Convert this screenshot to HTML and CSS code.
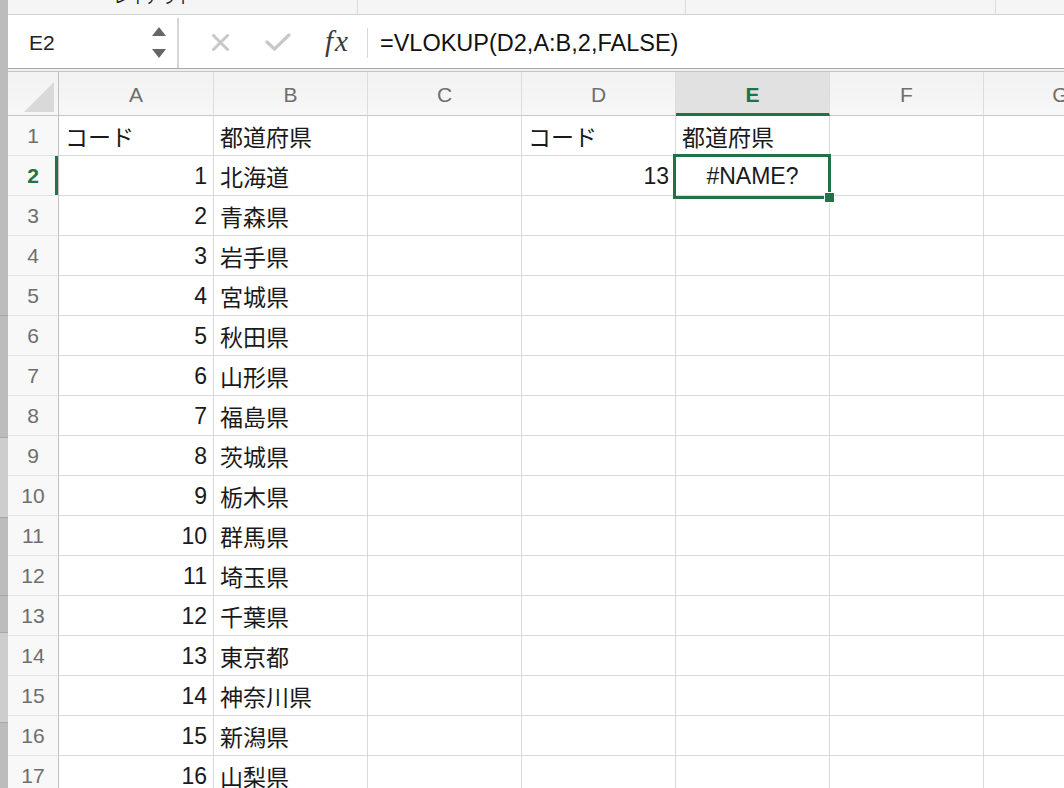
FILE: index.html
```html
<!DOCTYPE html>
<html lang="ja">

<head>
    <meta charset="UTF-8">
    <title>Book1 - シート1</title>
    <link rel="stylesheet" href="styles.css">
</head>

<body>
    <!-- edge of the window behind -->
    <div class="dock">
        <div class="dock-seg" style="height: 316px"></div>
        <div class="dock-seg" style="height: 122px"></div>
        <div class="dock-seg dock-light" style="height: 80px"></div>
        <div class="dock-seg" style="height: 78px"></div>
        <div class="dock-seg" style="height: 37px"></div>
        <div class="dock-seg dock-light" style="height: 90px"></div>
    </div>

    <div class="app">
        <div class="ribbon">
            <div class="ribbon-group ribbon-first"><span class="ribbon-label">レイアウト</span></div>
            <div class="ribbon-group ribbon-second"></div>
            <div class="ribbon-group ribbon-third"></div>
        </div>

        <div class="formula-bar">
            <div class="name-box">
                <span class="name-ref">E2</span>
                <svg class="spinner" width="14" height="32" viewBox="0 0 14 32">
                    <polygon points="7,0 14,9 0,9" fill="#666"/>
                    <polygon points="0,22 14,22 7,31" fill="#666"/>
                </svg>
            </div>
            <div class="fx-tools">
                <svg class="btn-cancel" width="17" height="17" viewBox="0 0 17 17">
                    <path d="M1.5 1.5 L15.5 15.5 M15.5 1.5 L1.5 15.5" stroke="#c8c8c8" stroke-width="3" stroke-linecap="round"/>
                </svg>
                <svg class="btn-enter" width="26" height="18" viewBox="0 0 26 18">
                    <path d="M2 9 L9.5 16 L24 2" fill="none" stroke="#c8c8c8" stroke-width="3.2" stroke-linecap="round" stroke-linejoin="round"/>
                </svg>
                <span class="fx-label">fx</span>
                <span class="fx-sep"></span>
            </div>
            <div class="formula-text">=VLOKUP(D2,A:B,2,FALSE)</div>
        </div>
        <div class="bar-gap"></div>

        <div class="sheet">
            <div class="ch corner">
                <svg width="30" height="30" viewBox="0 0 30 30"><polygon points="30,0 30,30 0,30" fill="#d9d9d9"/></svg>
            </div>
            <div class="ch">A</div>
            <div class="ch">B</div>
            <div class="ch">C</div>
            <div class="ch">D</div>
            <div class="ch ch-active">E</div>
            <div class="ch">F</div>
            <div class="ch">G</div>

            <div class="rh">1</div><div class="c">コード</div><div class="c">都道府県</div><div class="c"></div><div class="c">コード</div><div class="c">都道府県</div><div class="c"></div><div class="c"></div>
            <div class="rh rh-active">2</div><div class="c r">1</div><div class="c">北海道</div><div class="c"></div><div class="c r">13</div><div class="c mid active"><span class="sel"><span class="handle"></span></span>#NAME?</div><div class="c"></div><div class="c"></div>
            <div class="rh">3</div><div class="c r">2</div><div class="c">青森県</div><div class="c"></div><div class="c"></div><div class="c"></div><div class="c"></div><div class="c"></div>
            <div class="rh">4</div><div class="c r">3</div><div class="c">岩手県</div><div class="c"></div><div class="c"></div><div class="c"></div><div class="c"></div><div class="c"></div>
            <div class="rh">5</div><div class="c r">4</div><div class="c">宮城県</div><div class="c"></div><div class="c"></div><div class="c"></div><div class="c"></div><div class="c"></div>
            <div class="rh">6</div><div class="c r">5</div><div class="c">秋田県</div><div class="c"></div><div class="c"></div><div class="c"></div><div class="c"></div><div class="c"></div>
            <div class="rh">7</div><div class="c r">6</div><div class="c">山形県</div><div class="c"></div><div class="c"></div><div class="c"></div><div class="c"></div><div class="c"></div>
            <div class="rh">8</div><div class="c r">7</div><div class="c">福島県</div><div class="c"></div><div class="c"></div><div class="c"></div><div class="c"></div><div class="c"></div>
            <div class="rh">9</div><div class="c r">8</div><div class="c">茨城県</div><div class="c"></div><div class="c"></div><div class="c"></div><div class="c"></div><div class="c"></div>
            <div class="rh">10</div><div class="c r">9</div><div class="c">栃木県</div><div class="c"></div><div class="c"></div><div class="c"></div><div class="c"></div><div class="c"></div>
            <div class="rh">11</div><div class="c r">10</div><div class="c">群馬県</div><div class="c"></div><div class="c"></div><div class="c"></div><div class="c"></div><div class="c"></div>
            <div class="rh">12</div><div class="c r">11</div><div class="c">埼玉県</div><div class="c"></div><div class="c"></div><div class="c"></div><div class="c"></div><div class="c"></div>
            <div class="rh">13</div><div class="c r">12</div><div class="c">千葉県</div><div class="c"></div><div class="c"></div><div class="c"></div><div class="c"></div><div class="c"></div>
            <div class="rh">14</div><div class="c r">13</div><div class="c">東京都</div><div class="c"></div><div class="c"></div><div class="c"></div><div class="c"></div><div class="c"></div>
            <div class="rh">15</div><div class="c r">14</div><div class="c">神奈川県</div><div class="c"></div><div class="c"></div><div class="c"></div><div class="c"></div><div class="c"></div>
            <div class="rh">16</div><div class="c r">15</div><div class="c">新潟県</div><div class="c"></div><div class="c"></div><div class="c"></div><div class="c"></div><div class="c"></div>
            <div class="rh">17</div><div class="c r">16</div><div class="c">山梨県</div><div class="c"></div><div class="c"></div><div class="c"></div><div class="c"></div><div class="c"></div>
        </div>
    </div>
</body>

</html>
```

FILE: styles.css
```css
:root {
    --green: #217346;
    --grid: #d9d9d9;
    --head-text: #6e6e6e;
}

* {
    box-sizing: border-box;
}

body {
    margin: 0;
    width: 1064px;
    height: 788px;
    overflow: hidden;
    display: flex;
    font-family: "Liberation Sans", "Noto Sans CJK JP", sans-serif;
    background-color: #fff;
    color: #1a1a1a;
}

/* window edge on the left */
.dock {
    width: 8px;
    flex: none;
    background-color: #bcbcbc;
    display: flex;
    flex-direction: column;
}

.dock-seg {
    flex: none;
    border-bottom: 1px solid #a6a6a6;
}

.dock-light {
    background-color: #cdcdcd;
}

.app {
    flex: 1;
    min-width: 0;
    display: flex;
    flex-direction: column;
    overflow: hidden;
}

/* bottom of the ribbon */
.ribbon {
    height: 15px;
    flex: none;
    display: flex;
    background-color: #f5f5f5;
    border-bottom: 1px solid #d2d2d2;
    overflow: hidden;
}

.ribbon-group {
    flex: none;
    border-right: 1px solid #dcdcdc;
    overflow: hidden;
}

.ribbon-first {
    width: 350px;
    padding-left: 105px;
}

.ribbon-second {
    width: 328px;
}

.ribbon-third {
    width: 310px;
}

.ribbon-label {
    display: block;
    margin-top: -17px;
    font-size: 16px;
    line-height: 30px;
    color: #1e1e1e;
    white-space: nowrap;
}

/* formula bar */
.formula-bar {
    height: 54px;
    flex: none;
    display: flex;
    align-items: stretch;
    padding-top: 3px;
    border-bottom: 1px solid #a9a9a9;
}

.name-box {
    width: 171px;
    flex: none;
    display: flex;
    align-items: center;
    justify-content: space-between;
    padding: 0 11px 0 21px;
    border-right: 2px solid #d6d6d6;
}

.name-ref {
    font-size: 21px;
    color: #222;
}

.fx-tools {
    display: flex;
    align-items: center;
    flex: none;
}

.btn-cancel {
    margin-left: 33px;
    margin-top: -2px;
}

.btn-enter {
    margin-left: 36px;
    margin-top: -2px;
}

.fx-label {
    margin-left: 34px;
    margin-top: -3px;
    font-family: "Liberation Serif", "DejaVu Serif", serif;
    font-style: italic;
    font-size: 29px;
    color: #3a3a3a;
    letter-spacing: 2px;
}

.fx-sep {
    width: 1px;
    height: 30px;
    margin-left: 17px;
    background-color: #d6d6d6;
}

.formula-text {
    display: flex;
    align-items: center;
    padding-left: 12px;
    font-size: 23.5px;
    color: #111;
    white-space: nowrap;
}

.bar-gap {
    height: 3px;
    flex: none;
    background-color: #f0f0f0;
    border-bottom: 1px solid #c4c4c4;
}

/* worksheet grid */
.sheet {
    display: grid;
    grid-template-columns: 51px 155px repeat(6, 154px);
    grid-template-rows: 44px;
    grid-auto-rows: 40px;
}

.ch {
    display: flex;
    align-items: center;
    justify-content: center;
    font-size: 21px;
    color: var(--head-text);
    background: linear-gradient(#f2f2f2, #f7f7f7);
    border-right: 1px solid #dcdcdc;
    border-bottom: 1px solid #c8c8c8;
    padding-top: 2px;
}

.corner {
    align-items: flex-end;
    justify-content: flex-end;
    padding: 0 4px 3px 0;
    border-right: 1px solid #c0c0c0;
}

.ch-active {
    background: #e1e1e1;
    color: var(--green);
    font-weight: bold;
    border-bottom: 3px solid var(--green);
    padding-top: 4px;
}

.rh {
    display: flex;
    align-items: center;
    justify-content: center;
    font-size: 21px;
    color: var(--head-text);
    background-color: #f8f8f8;
    border-right: 1px solid #c0c0c0;
    border-bottom: 1px solid #e4e4e4;
    padding-top: 1px;
}

.rh-active {
    color: var(--green);
    font-weight: bold;
    box-shadow: inset -3px 0 0 var(--green);
}

.c {
    display: flex;
    align-items: center;
    padding: 1px 6px 0 6px;
    font-size: 23px;
    white-space: nowrap;
    border-right: 1px solid var(--grid);
    border-bottom: 1px solid var(--grid);
}

.c.r {
    justify-content: flex-end;
}

.c.mid {
    justify-content: center;
}

.active {
    position: relative;
}

.sel {
    position: absolute;
    top: -2px;
    left: -3px;
    right: -2px;
    bottom: -4px;
    border: 3px solid var(--green);
    z-index: 2;
}

.handle {
    position: absolute;
    right: -7px;
    bottom: -7px;
    width: 11px;
    height: 11px;
    background-color: var(--green);
    border: 1px solid #fff;
}
```
